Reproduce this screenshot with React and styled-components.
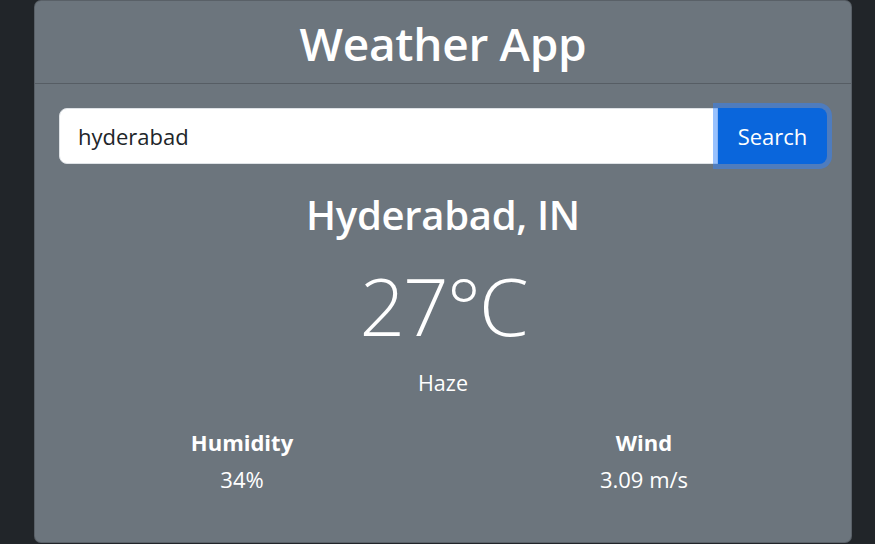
import React, { useState } from 'react';
import styled, { createGlobalStyle } from 'styled-components';

const GlobalStyle = createGlobalStyle`
    html, body {
        margin : 0 ;
        padding : 0 ;
        background : #212529 ;
        font-family : "Open Sans", "Noto Sans", sans-serif ;
        color : #fff ;
    }
`;

const Page = styled.div`
    height : 544px ;
    overflow : hidden ;
    padding-left : 34px ;
`;

const Card = styled.div`
    width : 818px ;
    height : 543px ;
    box-sizing : border-box ;
    background : #6c757d ;
    border : 1px solid rgba(0, 0, 0, 0.175) ;
    border-radius : 7px ;
    display : flex ;
    flex-direction : column ;
`;

const Header = styled.div`
    height : 82px ;
    border-bottom : 1px solid rgba(0, 0, 0, 0.2) ;
    display : flex ;
    justify-content : center ;
    align-items : flex-start ;
`;

const Title = styled.h1`
    margin : 15px 0 0 ;
    font-size : 46px ;
    font-weight : 600 ;
    line-height : 1.2 ;
    letter-spacing : -0.3px ;
`;

const Body = styled.div`
    padding : 24px 24px 0 ;
    display : flex ;
    flex-direction : column ;
    align-items : center ;
`;

const SearchRow = styled.form`
    width : 100% ;
    display : flex ;
    height : 56px ;
`;

const Input = styled.input`
    flex : 1 ;
    min-width : 0 ;
    box-sizing : border-box ;
    border : 1px solid #dee2e6 ;
    border-radius : 8px 0 0 8px ;
    padding : 0 18px ;
    font-family : inherit ;
    font-size : 22px ;
    color : #212529 ;
    background : #fff ;
    outline : none ;
`;

const Button = styled.button`
    position : relative ;
    z-index : 1 ;
    width : 109px ;
    border : none ;
    border-radius : 0 8px 8px 0 ;
    background : #0a66dc ;
    color : #fff ;
    font-family : inherit ;
    font-size : 22px ;
    box-shadow : 0 0 0 5px rgba(49, 132, 253, 0.5) ;
    cursor : pointer ;
`;

const City = styled.h2`
    margin : 27px 0 0 ;
    font-size : 40px ;
    font-weight : 600 ;
    line-height : 1.2 ;
    letter-spacing : -0.3px ;
`;

const Temp = styled.div`
    margin-top : 18px ;
    font-size : 80px ;
    font-weight : 300 ;
    line-height : 1.2 ;
    letter-spacing : -2px ;
`;

const Condition = styled.p`
    margin : 14px 0 0 ;
    font-size : 21.5px ;
    line-height : 1.5 ;
`;

const Stats = styled.div`
    margin-top : 27px ;
    display : grid ;
    grid-template-columns : 402px 402px ;
    justify-content : center ;
    width : 804px ;
`;

const Stat = styled.div`
    text-align : center ;
`;

const StatLabel = styled.div`
    font-size : 22px ;
    font-weight : 700 ;
    line-height : 1.5 ;
`;

const StatValue = styled.div`
    margin-top : 4px ;
    font-size : 22px ;
    line-height : 1.5 ;
`;

const App = () => {
    const [ city, setCity ] = useState('hyderabad') ;

    return (
        <Page>
            <GlobalStyle />
            <Card>
                <Header>
                    <Title>Weather App</Title>
                </Header>
                <Body>
                    <SearchRow onSubmit={e => e.preventDefault()}>
                        <Input value={city} onChange={e => setCity(e.target.value)} />
                        <Button type="submit">Search</Button>
                    </SearchRow>
                    <City>Hyderabad, IN</City>
                    <Temp>27°C</Temp>
                    <Condition>Haze</Condition>
                    <Stats>
                        <Stat>
                            <StatLabel>Humidity</StatLabel>
                            <StatValue>34%</StatValue>
                        </Stat>
                        <Stat>
                            <StatLabel>Wind</StatLabel>
                            <StatValue>3.09 m/s</StatValue>
                        </Stat>
                    </Stats>
                </Body>
            </Card>
        </Page>
    ) ;
} ;

export default App ;
